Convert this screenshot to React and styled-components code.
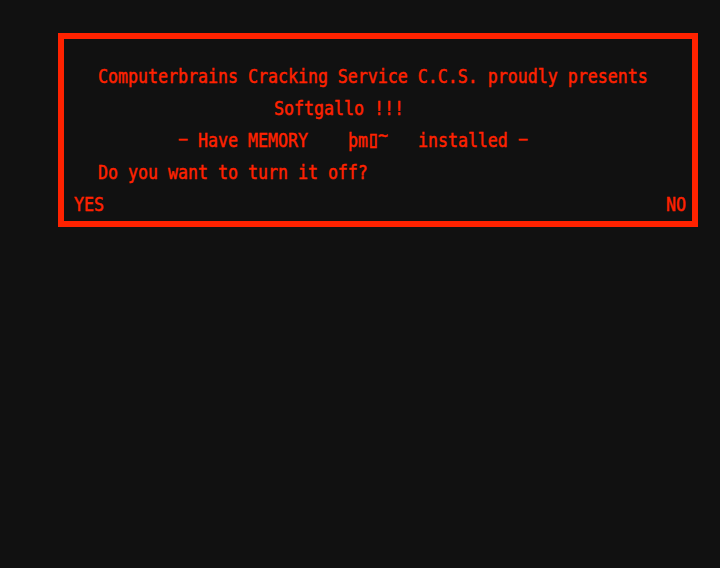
import React from "react";
import styled, { createGlobalStyle } from "styled-components";

const GlobalStyle = createGlobalStyle`
  html, body { margin: 0; background: #111; }
`;

const Screen = styled.main`
  box-sizing: border-box;
  width: 720px;
  height: 568px;
  padding: 33px 22px 0 58px;
  overflow: hidden;
  background: #111;
  color: #ff2200;
  font-family: "DejaVu Sans Mono", monospace;
  font-size: 19.2px;
  -webkit-text-stroke: 0.5px #ff2200;
`;

const AlertBox = styled.section`
  box-sizing: border-box;
  width: 640px;
  height: 194px;
  padding: 22px 6px 0 10px;
  border: 6px solid #ff2200;
`;

const Line = styled.div`
  height: 32px;
  padding-left: ${(p) => p.$indent || 0}px;
  line-height: 32px;
`;

const Choices = styled.div`
  display: flex;
  justify-content: space-between;
  height: 32px;
  line-height: 32px;
`;

const Cells = styled.span`
  display: block;
  width: ${(p) => p.$count * 10}px;
  white-space: pre;
  transform: scaleX(0.8652);
  transform-origin: left center;
`;

const Glyph = styled.span`
  display: inline-block;
  line-height: 1;
  transform: translateY(${(p) => p.$lift || 0}px) scale(${(p) => p.$wide || 1}, ${(p) => p.$tall || 1});
`;

const Choice = styled.button`
  padding: 0;
  border: 0;
  background: none;
  color: inherit;
  font: inherit;
  line-height: inherit;
  text-align: left;
`;

const Text = ({ children }) => <Cells $count={children.length}>{children}</Cells>;

export default function App() {
  return (
    <>
      <GlobalStyle />
      <Screen>
        <AlertBox>
          <Line $indent={24}><Text>Computerbrains Cracking Service C.C.S. proudly presents</Text></Line>
          <Line $indent={200}><Text>Softgallo !!!</Text></Line>
          <Line $indent={104}>
            <Cells $count={35}>
              <Glyph $wide={0.85} $lift={-2}>–</Glyph>
              {" Have MEMORY    þm"}
              <Glyph $wide={1.3} $tall={1.22} $lift={-1}>▯</Glyph>
              <Glyph $lift={-5}>~</Glyph>
              {"   installed "}
              <Glyph $wide={0.85} $lift={-2}>–</Glyph>
            </Cells>
          </Line>
          <Line $indent={24}><Text>Do you want to turn it off?</Text></Line>
          <Choices>
            <Choice><Text>YES</Text></Choice>
            <Choice><Text>NO</Text></Choice>
          </Choices>
        </AlertBox>
      </Screen>
    </>
  );
}
